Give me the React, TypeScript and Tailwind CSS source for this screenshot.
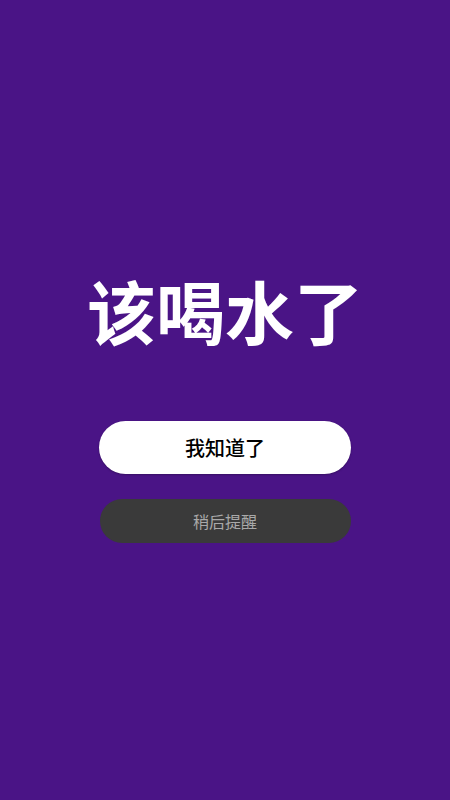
import React from 'react';

const font = { fontFamily: '"Noto Sans CJK SC", "Noto Sans", sans-serif' };

export default function App() {
  return (
    <div
      className="min-h-[800px] w-full bg-[#4a1486] flex flex-col items-center justify-center pt-[20px]"
      style={font}
    >
      <h1 className="text-[69px] leading-[66px] font-semibold text-white">该喝水了</h1>

      <div className="mt-[78px] flex flex-col items-center gap-[25px]">
        <button className="w-[252px] h-[53px] rounded-full bg-white text-black text-[20px] font-medium shadow-[0_1px_2px_rgba(0,0,0,0.25)]">
          我知道了
        </button>
        <button className="w-[251px] h-[44px] rounded-full bg-[#3a3a3a] text-[#a9a9a9] text-[16px]">
          稍后提醒
        </button>
      </div>
    </div>
  );
}
